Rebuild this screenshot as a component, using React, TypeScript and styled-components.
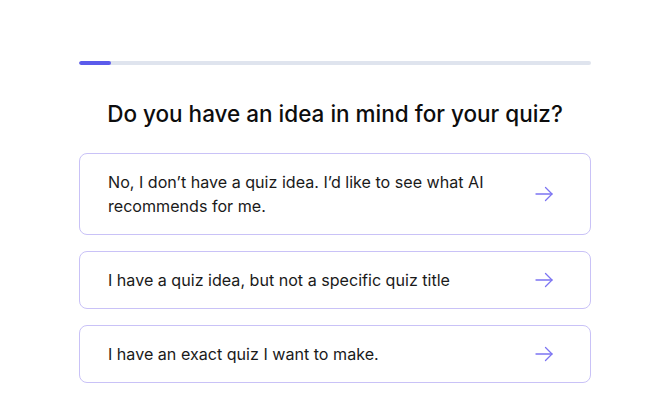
import React from "react";
import styled, { createGlobalStyle } from "styled-components";

const Global = createGlobalStyle`
  html, body { margin: 0; padding: 0; background: #ffffff; }
  body { font-family: Inter, "Noto Sans", sans-serif; color: #111; -webkit-font-smoothing: antialiased; }
`;

const Page = styled.main`
  padding: 61px 63px 0 79px;
`;

const Column = styled.div`
  width: 512px;
  display: flex;
  flex-direction: column;
`;

const Track = styled.div`
  height: 4px;
  border-radius: 2px;
  background: #dfe4ee;
  overflow: hidden;
`;

const Fill = styled.div`
  height: 100%;
  background: #5b5beb;
  border-radius: 2px;
`;

const Title = styled.h1`
  margin: 35px 0 0;
  font-size: 22.5px;
  line-height: 28px;
  font-weight: 500;
  text-align: center;
  color: #0d0d0d;
`;

const Options = styled.div`
  margin-top: 25px;
  display: flex;
  flex-direction: column;
  gap: 16px;
`;

const Option = styled.button`
  display: flex;
  align-items: center;
  justify-content: space-between;
  gap: 20px;
  width: 100%;
  padding: 16px 37px 16px 28px;
  border: 1px solid #c9c2f7;
  border-radius: 8px;
  background: #fff;
  text-align: left;
  cursor: pointer;
  font-family: inherit;
  svg { flex-shrink: 0; }
`;

const Label = styled.span`
  max-width: 420px;
  font-size: 16.1px;
  line-height: 24px;
  font-weight: 400;
  color: #1a1a1a;
`;

const Arrow = () => (
  <svg width="18" height="18" viewBox="0 0 18 18" fill="none" stroke="#7c74f2" strokeWidth="1.3" strokeLinecap="round" strokeLinejoin="round">
    <path d="M1 9H17" />
    <path d="M10.5 2.5L17 9L10.5 15.5" />
  </svg>
);

const options = [
  "No, I don\u2019t have a quiz idea. I\u2019d like to see what AI recommends for me.",
  "I have a quiz idea, but not a specific quiz title",
  "I have an exact quiz I want to make.",
];

export default function App() {
  return (
    <>
      <Global />
      <Page>
        <Column>
          <Track>
            <Fill style={{ width: `${(1 / 16) * 100}%` }} />
          </Track>
          <Title>Do you have an idea in mind for your quiz?</Title>
          <Options>
            {options.map((o) => (
              <Option key={o}>
                <Label>{o}</Label>
                <Arrow />
              </Option>
            ))}
          </Options>
        </Column>
      </Page>
    </>
  );
}
